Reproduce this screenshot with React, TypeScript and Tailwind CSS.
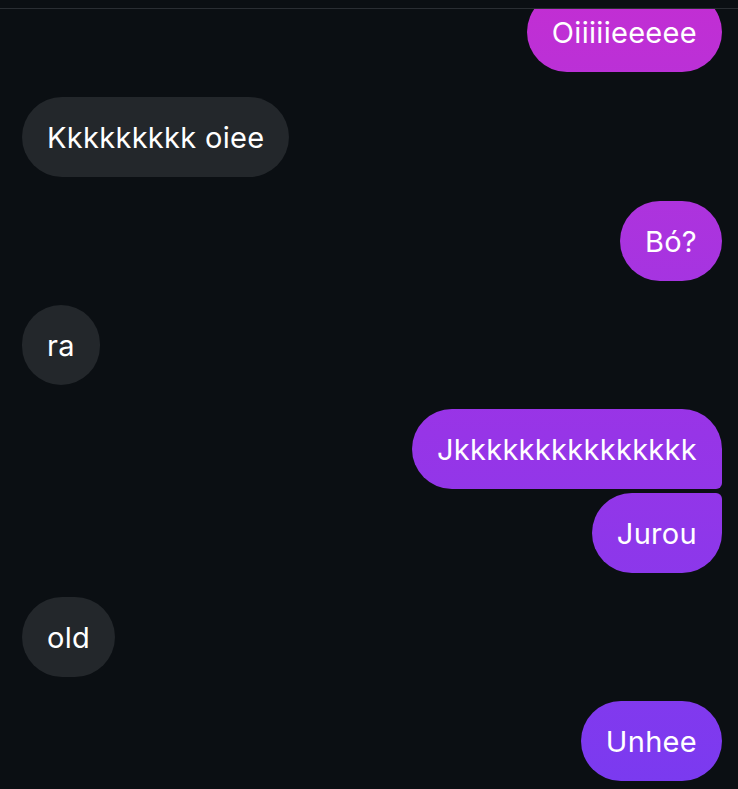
import React from 'react';

type Msg = { id: number; text: string; mine: boolean; pos?: 'first' | 'last' };

const messages: Msg[] = [
  { id: 1, text: 'Oiiiiieeeee', mine: true },
  { id: 2, text: 'Kkkkkkkkk oiee', mine: false },
  { id: 3, text: 'Bó?', mine: true },
  { id: 4, text: 'ra', mine: false },
  { id: 5, text: 'Jkkkkkkkkkkkkkkk', mine: true, pos: 'first' },
  { id: 6, text: 'Jurou', mine: true, pos: 'last' },
  { id: 7, text: 'old', mine: false },
  { id: 8, text: 'Unhee', mine: true },
];

function Bubble({ msg }: { msg: Msg }) {
  const corner =
    msg.pos === 'first' ? 'rounded-br-[6px]' : msg.pos === 'last' ? 'rounded-tr-[6px]' : '';

  return (
    <div className={msg.mine ? 'flex justify-end' : 'flex justify-start'}>
      <div
        className={
          'h-[80px] flex items-center px-[25px] rounded-[40px] text-[29px] tracking-[0.3px] text-white leading-none ' +
          (msg.mine
            ? 'bg-fixed bg-linear-to-b from-[#c22ed3] via-[#9a34e6] to-[#7a3af0] '
            : 'bg-[#23272b] ') +
          corner
        }
      >
        {msg.text}
      </div>
    </div>
  );
}

export default function App() {
  return (
    <div
      className="h-[789px] w-full bg-[#0b0f13] flex flex-col overflow-hidden"
      style={{ fontFamily: 'Inter, "Noto Sans", sans-serif' }}
    >
      {/* header edge */}
      <div className="h-[9px] shrink-0 border-b border-[#2a2e33]" />

      {/* chat */}
      <div className="flex-1 min-h-0 overflow-hidden flex flex-col justify-end pl-[22px] pr-[16px] pb-[8px]">
        {messages.map((m, i) => {
          const prev = messages[i - 1];
          const gap = !prev ? '' : m.pos === 'last' ? 'mt-[4px]' : i === 1 ? 'mt-[25px]' : 'mt-[24px]';
          return (
            <div key={m.id} className={'shrink-0 ' + gap}>
              <Bubble msg={m} />
            </div>
          );
        })}
      </div>
    </div>
  );
}
